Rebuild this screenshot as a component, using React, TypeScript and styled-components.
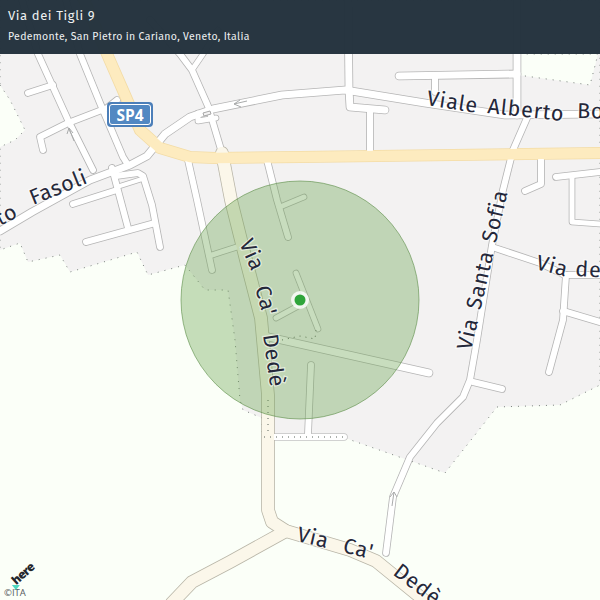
import React from 'react';
import styled, { createGlobalStyle } from 'styled-components';

const GlobalStyle = createGlobalStyle`
  html, body {
    margin: 0;
    padding: 0;
    background: #fbfff8;
  }
`;

const Page = styled.div`
  position: relative;
  width: 600px;
  height: 600px;
  overflow: hidden;
  background: #fbfff8;
`;

const MapCanvas = styled.svg`
  display: block;
  width: 600px;
  height: 600px;
`;

const Header = styled.header`
  position: absolute;
  top: 0;
  left: 0;
  right: 0;
  height: 54px;
  box-sizing: border-box;
  padding: 7px 8px 0;
  display: flex;
  flex-direction: column;
  gap: 6px;
  background: rgba(35, 49, 60, 0.975);
  color: #eef1f2;
  font-family: 'Fira Sans', 'Open Sans', 'Noto Sans', sans-serif;
`;

const Title = styled.div`
  font-size: 13px;
  line-height: 17px;
  letter-spacing: 0.6px;
`;

const Subtitle = styled.div`
  font-size: 10.5px;
  line-height: 14px;
  letter-spacing: 0.31px;
`;

const Attribution = styled.div`
  position: absolute;
  left: 4px;
  bottom: 2px;
  display: flex;
  flex-direction: column;
  gap: 1px;
  font-family: 'Open Sans', sans-serif;
`;

const HereLogo = styled.div`
  position: relative;
  margin-left: 10px;
  width: 24px;
  height: 15px;
  color: #24262c;
  font-size: 12px;
  font-weight: 800;
  letter-spacing: -0.8px;
  line-height: 15px;
  transform: rotate(-42deg);
  transform-origin: 4px 10px;

  &::before {
    content: '';
    position: absolute;
    left: -6px;
    top: 11px;
    width: 0;
    height: 0;
    border-left: 4px solid transparent;
    border-right: 4px solid transparent;
    border-top: 5px solid #4fd8c0;
    transform: rotate(42deg);
  }
`;

const Copyright = styled.div`
  font-size: 9.5px;
  line-height: 11px;
  color: #555a60;
`;

const UrbanArea = styled.path`
  fill: #f3f2f2;
  stroke: #77807a;
  stroke-width: 1;
  stroke-dasharray: 1 6;
`;

const PaleArea = styled.path`
  fill: #fbfff8;
  stroke: #77807a;
  stroke-width: 1;
  stroke-dasharray: 1 6;
`;

const Island = styled.path`
  fill: #f3f2f2;
  stroke: #a8a8a8;
  stroke-width: 1;
`;

const Casing = styled.path<{ $width: number; $kind: RoadKind }>`
  fill: none;
  stroke: ${({ $kind }) => CASING[$kind]};
  stroke-width: ${({ $width }) => $width + 1.6}px;
  stroke-linecap: round;
  stroke-linejoin: round;
`;

const RoadFill = styled.path<{ $width: number; $kind: RoadKind }>`
  fill: none;
  stroke: ${({ $kind }) => FILL[$kind]};
  stroke-width: ${({ $width }) => $width}px;
  stroke-linecap: round;
  stroke-linejoin: round;
`;

const RoadArrow = styled.path`
  fill: none;
  stroke: #a9abab;
  stroke-width: 1;
`;

const DottedLine = styled.path`
  fill: none;
  stroke: #59625a;
  stroke-width: 1;
  stroke-dasharray: 1 5;
`;

const Radius = styled.circle`
  fill: rgba(106, 164, 78, 0.37);
  stroke: rgba(90, 140, 70, 0.6);
  stroke-width: 1;
`;

const MarkerHalo = styled.circle`
  fill: rgba(255, 255, 255, 0.8);
`;

const MarkerDot = styled.circle`
  fill: #2fa53a;
`;

const StreetLabel = styled.text`
  font-family: 'Fira Sans', 'Open Sans', 'Noto Sans', sans-serif;
  font-size: 21.5px;
  letter-spacing: 0.8px;
  fill: #25283a;
  stroke: rgba(255, 255, 255, 0.55);
  stroke-width: 2.5px;
  paint-order: stroke;
  word-spacing: 3px;
`;

const ShieldOuter = styled.rect`
  fill: #4c7fb9;
`;

const ShieldInner = styled.rect`
  fill: #5288c2;
  stroke: #ffffff;
  stroke-width: 1;
`;

const ShieldText = styled.text`
  font-family: 'Open Sans', sans-serif;
  font-size: 15.5px;
  font-weight: 700;
  fill: #ffffff;
  text-anchor: middle;
`;

type RoadKind = 'minor' | 'lane' | 'cream' | 'major';

const CASING: Record<RoadKind, string> = {
  minor: '#b5b5b5',
  lane: '#c4c4c4',
  cream: '#b9b6a8',
  major: '#f3dca6',
};

const FILL: Record<RoadKind, string> = {
  minor: '#ffffff',
  lane: '#ffffff',
  cream: '#fbf7ea',
  major: '#fdebbf',
};

const ROADS: { d: string; width: number; kind: RoadKind }[] = [
  // top left grid
  { d: 'M22 0 L38 54 L68 120 L93 170', width: 6, kind: 'minor' },
  { d: 'M66 0 L80 54 L100 103 L123 157 L128 165', width: 6, kind: 'minor' },
  { d: 'M28 93 L53 85', width: 6, kind: 'minor' },
  { d: 'M43 150 L40 137 L68 123 L107 108 L117 100', width: 6, kind: 'minor' },
  { d: 'M112 168 L128 228', width: 6, kind: 'minor' },
  { d: 'M116 176 L138 173 L143 176 L152 205 L160 247', width: 6, kind: 'minor' },
  { d: 'M73 204 L117 190', width: 6, kind: 'minor' },
  { d: 'M120 186 L142 179', width: 4, kind: 'minor' },
  { d: 'M86 242 L155 223', width: 6, kind: 'minor' },
  { d: 'M0 231 L32 212 L90 180 L130 165 L147 156 L165 134 L190 117 L213 109 L282 95 L345 90 L425 103 L505 115 L600 114', width: 7, kind: 'minor' },
  // upper middle
  { d: 'M150 20 L180 54 L192 70 L208 106 L222 153', width: 6, kind: 'minor' },
  { d: 'M218 30 L203 54 L192 70', width: 5, kind: 'minor' },
  { d: 'M198 113 L198 121 L216 118', width: 5, kind: 'minor' },
  { d: 'M348 0 L349 90 L350 107 L385 110', width: 7, kind: 'minor' },
  { d: 'M370 110 L370 150', width: 6, kind: 'minor' },
  { d: 'M399 76 L517 74', width: 7, kind: 'minor' },
  { d: 'M435 76 L435 92', width: 6, kind: 'minor' },
  { d: 'M517 0 L517 115', width: 7, kind: 'minor' },
  // below the main road
  { d: 'M188 160 L197 200 L212 270', width: 6, kind: 'minor' },
  { d: 'M209 256 L240 246', width: 5, kind: 'minor' },
  { d: 'M267 160 L277 200 L288 237', width: 6, kind: 'minor' },
  { d: 'M280 207 L304 197', width: 5, kind: 'minor' },
  // Via Santa Sofia and side roads
  { d: 'M527 118 L513 150 L503 190 L492 245 L477 340 L470 380 L463 397 L437 423 L410 457 L393 497 L386 553', width: 6, kind: 'minor' },
  { d: 'M492 247 L540 263 L565 275 L600 275', width: 6, kind: 'minor' },
  { d: 'M566 275 L563 320 L549 372', width: 6, kind: 'minor' },
  { d: 'M563 311 L600 322', width: 6, kind: 'minor' },
  { d: 'M473 382 L502 389', width: 6, kind: 'minor' },
  { d: 'M541 160 L541 184 L525 191', width: 6, kind: 'minor' },
  { d: 'M556 177 L600 172', width: 6, kind: 'minor' },
  { d: 'M572 178 L572 222 L600 224', width: 5, kind: 'minor' },
  // around the marker
  { d: 'M296 273 L318 329', width: 5, kind: 'minor' },
  { d: 'M276 318 L300 305', width: 5, kind: 'minor' },
  { d: 'M264 336 L429 373', width: 7, kind: 'minor' },
  { d: 'M311 365 L308 434', width: 6, kind: 'minor' },
  { d: 'M268 437 L344 437', width: 6, kind: 'lane' },
  // Via Ca' Dede
  { d: 'M222 153 L231 200 L246 260 L261 318 L268 395 L268 510 L272 522 L286 531 L350 550 L376 561 L430 605', width: 12, kind: 'cream' },
  { d: 'M286 531 L230 562 L192 582 L172 603', width: 12, kind: 'cream' },
  // SP4
  { d: 'M84 0 L107 54 L125 95 L140 130 L160 148 L190 157 L215 158 L300 157 L600 153', width: 10.5, kind: 'major' },
];

export default function App() {
  return (
    <Page>
      <GlobalStyle />
      <MapCanvas viewBox="0 0 600 600">
        <UrbanArea d="M0 85 L10 100 L25 130 L15 140 L0 147 L0 250 L20 243 L28 262 L60 255 L70 272 L137 252 L148 275 L185 265 L205 290 L228 290 L235 340 L240 400 L243 410 L262 418 L262 438 L345 438 L445 473 L497 407 L560 405 L600 385 L600 0 L0 0 Z" />
        <PaleArea d="M517 54 L518 75 L590 85 L598 54 Z" />
        {ROADS.map((road) => (
          <Casing key={road.d} d={road.d} $width={road.width} $kind={road.kind} />
        ))}
        {ROADS.map((road) => (
          <RoadFill key={road.d} d={road.d} $width={road.width} $kind={road.kind} />
        ))}
        <Island d="M203 113 L210 111 L211 114 L204 116 Z" />
        <RoadArrow d="M247 101 L234 104 L240 100 M234 104 L241 107" />
        <RoadArrow d="M74 141 L69 128 L67 134 M69 128 L73 133" />
        <RoadArrow d="M392 506 L394 492 L390 497 M394 492 L397 497" />
        <DottedLine d="M268 400 L268 436 M264 437 L346 437" />
        <DottedLine d="M282 340 L300 336 L315 339 L316 330" />
        <Radius cx="300" cy="300" r="119" />
        <MarkerHalo cx="300" cy="300" r="9" />
        <MarkerDot cx="300" cy="300" r="5.5" />
        <StreetLabel transform="translate(0 226) rotate(-27)">to</StreetLabel>
        <StreetLabel transform="translate(33 205) rotate(-22)">Fasoli</StreetLabel>
        <StreetLabel transform="translate(426 105) rotate(9)">Viale</StreetLabel>
        <StreetLabel transform="translate(487 113) rotate(6)">Alberto</StreetLabel>
        <StreetLabel transform="translate(577 118) rotate(1)">Bo</StreetLabel>
        <StreetLabel transform="translate(471 351) rotate(-77)">Via Santa Sofia</StreetLabel>
        <StreetLabel transform="translate(535 269) rotate(14)">Via</StreetLabel>
        <StreetLabel transform="translate(575 276) rotate(3)">de</StreetLabel>
        <StreetLabel transform="translate(239 243) rotate(66)">Via</StreetLabel>
        <StreetLabel transform="translate(255 288) rotate(74)">Ca'</StreetLabel>
        <StreetLabel transform="translate(263 335) rotate(82)">Dedè</StreetLabel>
        <StreetLabel transform="translate(296 541) rotate(13)">Via</StreetLabel>
        <StreetLabel transform="translate(342 552) rotate(14)">Ca'</StreetLabel>
        <StreetLabel transform="translate(392 574) rotate(37)">Dedè</StreetLabel>
        <ShieldOuter x="107" y="102" width="46" height="25" rx="4" />
        <ShieldInner x="109.5" y="104.5" width="41" height="20" rx="2.5" />
        <ShieldText x="130" y="120.5">SP4</ShieldText>
      </MapCanvas>
      <Header>
        <Title>Via dei Tigli 9</Title>
        <Subtitle>Pedemonte, San Pietro in Cariano, Veneto, Italia</Subtitle>
      </Header>
      <Attribution>
        <HereLogo>here</HereLogo>
        <Copyright>©ITA</Copyright>
      </Attribution>
    </Page>
  );
}
